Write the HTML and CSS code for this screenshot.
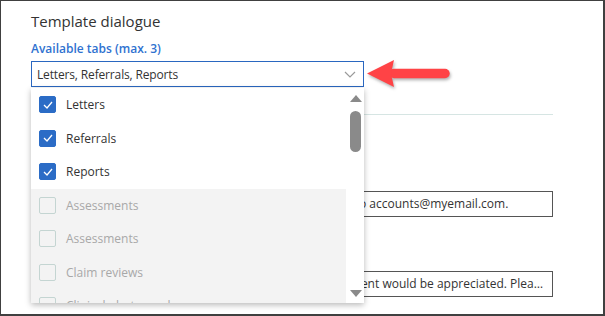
FILE: index.html
```html
<!DOCTYPE html>
<html lang="en">
<head>
    <meta charset="UTF-8">
    <title>Template dialogue</title>
    <link rel="stylesheet" href="styles.css">
</head>
<body>
    <div class="frame">
        <div class="dialog">
            <div class="dialog-title">Template dialogue</div>
            <div class="field-label">Available tabs (max. 3)</div>

            <div class="select-wrap">
                <div class="select-box">
                    <span>Letters, Referrals, Reports</span>
                    <svg class="chevron" width="12" height="7" viewBox="0 0 12 7">
                        <polyline points="1,1 6,6 11,1" fill="none" stroke="#9a9a9a" stroke-width="1.2"/>
                    </svg>
                </div>

                <div class="dropdown">
                    <ul class="option-list">
                        <li class="option">
                            <span class="check checked"><svg width="10" height="8" viewBox="0 0 10 8"><polyline points="1,4 4,7 9,1" fill="none" stroke="#fff" stroke-width="1.3"/></svg></span>
                            Letters
                        </li>
                        <li class="option">
                            <span class="check checked"><svg width="10" height="8" viewBox="0 0 10 8"><polyline points="1,4 4,7 9,1" fill="none" stroke="#fff" stroke-width="1.3"/></svg></span>
                            Referrals
                        </li>
                        <li class="option">
                            <span class="check checked"><svg width="10" height="8" viewBox="0 0 10 8"><polyline points="1,4 4,7 9,1" fill="none" stroke="#fff" stroke-width="1.3"/></svg></span>
                            Reports
                        </li>
                        <li class="option disabled"><span class="check"></span>Assessments</li>
                        <li class="option disabled"><span class="check"></span>Assessments</li>
                        <li class="option disabled"><span class="check"></span>Claim reviews</li>
                        <li class="option disabled"><span class="check"></span>Clinical photographs</li>
                    </ul>
                    <div class="scrollbar">
                        <span class="scroll-up"></span>
                        <span class="scroll-thumb"></span>
                        <span class="scroll-down"></span>
                    </div>
                </div>

                <!-- callout arrow pointing at the select -->
                <svg class="callout" width="84" height="32" viewBox="0 0 84 32">
                    <line x1="28" y1="14.5" x2="79" y2="14.5" stroke="#ff4346" stroke-width="9.5" stroke-linecap="round"/>
                    <polygon points="1,14.5 28,1 25,14.5 28,28" fill="#ff4346"/>
                </svg>
            </div>

            <div class="divider"></div>

            <div class="text-input first">For any invoice queries, please send us an email directly to accounts@myemail.com.</div>
            <div class="text-input">Thank you for your custom. Settlement and prompt payment would be appreciated. Please contact us with any questions.</div>
        </div>
    </div>
</body>
</html>
```

FILE: styles.css
```css
* {
    margin: 0;
    padding: 0;
    box-sizing: border-box;
}
body {
    font-family: 'Open Sans', 'Noto Sans', sans-serif;
    color: #333;
    background: #fff;
}
.frame {
    width: 605px;
    height: 316px;
    border: 1px solid #404040;
    border-right-width: 2px;
    border-bottom-width: 2px;
    overflow: hidden;
}
.dialog {
    padding: 8px 50px 0 30px;
}
.dialog-title {
    font-size: 15px;
    line-height: 24px;
    color: #333;
}
.field-label {
    margin-top: 8px;
    font-size: 12px;
    line-height: 16px;
    font-weight: 600;
    color: #2f72d0;
}
.select-wrap {
    position: relative;
    width: 333px;
    margin-top: 4px;
}
.select-box {
    display: flex;
    align-items: center;
    justify-content: space-between;
    height: 26px;
    padding: 0 6px 0 5px;
    border: 1px solid #2a67c0;
    font-size: 12px;
    letter-spacing: -0.15px;
}
.chevron {
    margin-right: 1px;
}
.dropdown {
    position: absolute;
    top: 27px;
    left: 0;
    width: 333px;
    height: 215px;
    display: flex;
    background: #fff;
    box-shadow: 0 2px 6px rgba(0, 0, 0, 0.28);
    z-index: 2;
    overflow: hidden;
}
.option-list {
    list-style: none;
    flex: 1;
}
.option {
    display: flex;
    align-items: center;
    gap: 10px;
    height: 33.5px;
    padding-left: 8px;
    font-size: 12px;
    color: #333;
}
.option.disabled {
    background: #f3f3f3;
    color: #a8a8a8;
}
.check {
    display: flex;
    align-items: center;
    justify-content: center;
    width: 17px;
    height: 17px;
    border: 1px solid #c4d5d2;
    border-radius: 2px;
}
.check.checked {
    background: #2b6cc6;
    border-color: #2b6cc6;
}
.scrollbar {
    position: relative;
    width: 18px;
    background: #fff;
}
.scroll-up,
.scroll-down {
    position: absolute;
    left: 4px;
    width: 0;
    height: 0;
    border-left: 6px solid transparent;
    border-right: 6px solid transparent;
}
.scroll-up {
    top: 7px;
    border-bottom: 7px solid #8a8a8a;
}
.scroll-down {
    bottom: 6px;
    border-top: 7px solid #8a8a8a;
}
.scroll-thumb {
    position: absolute;
    top: 23px;
    left: 4px;
    width: 11px;
    height: 41px;
    border-radius: 6px;
    background: #8a8a8a;
}
.callout {
    position: absolute;
    top: -2px;
    left: 335px;
    filter: drop-shadow(1px 2px 1.5px rgba(0, 0, 0, 0.3));
}
.divider {
    margin-top: 27px;
    border-top: 1px solid #d6e5e3;
}
.text-input {
    margin-top: 54px;
    height: 26px;
    padding: 0 8px 0 7px;
    border: 1px solid #555;
    font-size: 12px;
    line-height: 24px;
    white-space: nowrap;
    overflow: hidden;
    text-overflow: ellipsis;
}
.text-input.first {
    margin-top: 76px;
}
```
